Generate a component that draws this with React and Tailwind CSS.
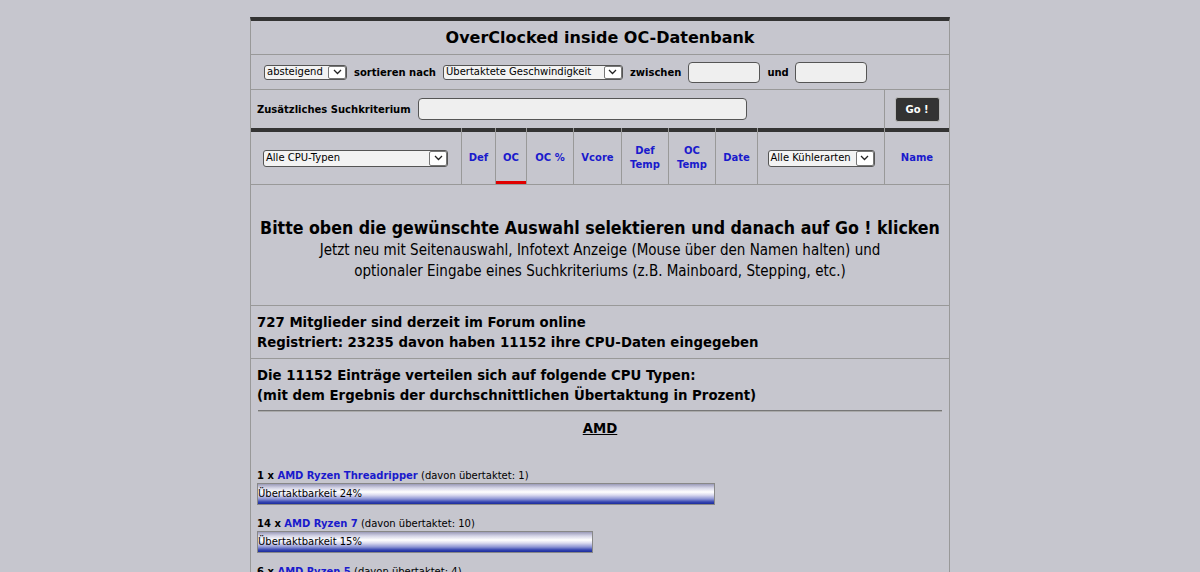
import React from 'react';

const Chevron = () => (
  <svg width="9" height="6" viewBox="0 0 9 6" fill="none">
    <path d="M1 1l3.5 3.5L8 1" stroke="#222" strokeWidth="1.3" />
  </svg>
);

// imitation of the old windows-style select box
const FakeSelect = ({ label, className }) => (
  <div className={`flex items-stretch border border-[#555] rounded-[3px] bg-[#f3f3f3] text-[10px] font-normal leading-none text-black ${className}`}>
    <span className="flex-1 flex items-center pl-[2px] whitespace-nowrap overflow-hidden">{label}</span>
    <span className="flex items-center justify-center w-[18px] border border-[#777] rounded-[2px] bg-white">
      <Chevron />
    </span>
  </div>
);

const Sep = () => <div className="w-px bg-[#999] self-stretch" />;

const HeadCell = ({ w, children, active }) => (
  <div className={`${w} border-t-4 border-[#333] flex items-center justify-center text-center text-[10px] font-bold leading-[14px] text-[#1a1acc] relative`}>
    {children}
    {active && <div className="absolute left-0 right-0 bottom-0 h-[3px] bg-[#e00000]" />}
  </div>
);

const entries = [
  { n: 1, name: 'AMD Ryzen Threadripper', oc: 1, pct: 24, w: 'w-[458px]' },
  { n: 14, name: 'AMD Ryzen 7', oc: 10, pct: 15, w: 'w-[336px]' },
  { n: 6, name: 'AMD Ryzen 5', oc: 4, pct: 13, w: 'w-[300px]' },
];

export default function App() {
  return (
    <div className="min-h-screen bg-[#c6c6ce] pt-[17px] font-['DejaVu_Sans','Liberation_Sans',sans-serif] text-black">
      <div className="mx-auto w-[700px] border-x border-[#999] border-t-4 border-t-[#333] bg-[#c6c6ce]">
        {/* title */}
        <div className="h-[34px] flex items-center justify-center border-b border-[#999] text-[16px] font-bold">
          OverClocked inside OC-Datenbank
        </div>

        {/* sort row */}
        <div className="h-[35px] flex items-center border-b border-[#999] pl-[13px] text-[10px] font-bold">
          <FakeSelect label="absteigend" className="w-[83px] h-[15px]" />
          <span className="ml-[7px]">sortieren nach</span>
          <FakeSelect label="Übertaktete Geschwindigkeit" className="ml-[7px] w-[180px] h-[15px]" />
          <span className="ml-[7px]">zwischen</span>
          <div className="ml-[7px] w-[72px] h-[21px] border border-[#555] rounded-[4px] bg-[#efefef]" />
          <span className="ml-[7px]">und</span>
          <div className="ml-[6px] w-[72px] h-[21px] border border-[#555] rounded-[4px] bg-[#efefef]" />
        </div>

        {/* search row */}
        <div className="h-[38px] flex">
          <div className="w-[633px] flex items-center pl-[6px] text-[10px] font-bold">
            <span>Zusätzliches Suchkriterium</span>
            <div className="ml-[7px] w-[329px] h-[22px] border border-[#555] rounded-[4px] bg-[#efefef]" />
          </div>
          <Sep />
          <div className="flex-1 flex items-center justify-center">
            <div className="w-[45px] h-[25px] rounded-[3px] bg-[#333] border border-[#bbb] text-white text-[10px] font-bold flex items-center justify-center">
              Go !
            </div>
          </div>
        </div>

        {/* table header */}
        <div className="h-[57px] flex border-b border-[#999]">
          <div className="w-[210px] border-t-4 border-[#333] flex items-center pl-[12px]">
            <FakeSelect label="Alle CPU-Typen" className="w-[185px] h-[17px]" />
          </div>
          <Sep />
          <HeadCell w="w-[33px]">Def</HeadCell>
          <Sep />
          <HeadCell w="w-[30px]" active>OC</HeadCell>
          <Sep />
          <HeadCell w="w-[46px]">OC %</HeadCell>
          <Sep />
          <HeadCell w="w-[47px]">Vcore</HeadCell>
          <Sep />
          <HeadCell w="w-[46px]">Def<br />Temp</HeadCell>
          <Sep />
          <HeadCell w="w-[46px]">OC<br />Temp</HeadCell>
          <Sep />
          <HeadCell w="w-[41px]">Date</HeadCell>
          <Sep />
          <div className="w-[126px] border-t-4 border-[#333] flex items-center justify-center">
            <FakeSelect label="Alle Kühlerarten" className="w-[107px] h-[17px]" />
          </div>
          <Sep />
          <HeadCell w="flex-1">Name</HeadCell>
        </div>

        {/* message */}
        <div className="h-[121px] border-b border-[#999] flex flex-col items-center justify-center text-center font-['DejaVu_Sans_Condensed','DejaVu_Sans',sans-serif] font-stretch-condensed pt-[8px]">
          <div className="text-[17.6px] font-bold leading-[22px]">
            Bitte oben die gewünschte Auswahl selektieren und danach auf Go ! klicken
          </div>
          <div className="text-[15px] leading-[21px] mt-[1px]">
            Jetzt neu mit Seitenauswahl, Infotext Anzeige (Mouse über den Namen halten) und
            <br />
            optionaler Eingabe eines Suchkriteriums (z.B. Mainboard, Stepping, etc.)
          </div>
        </div>

        {/* stats */}
        <div className="h-[53px] border-b border-[#999] pl-[6px] pt-[7px] text-[13.3px] font-bold leading-[20px]">
          <div>727 Mitglieder sind derzeit im Forum online</div>
          <div>Registriert: 23235 davon haben 11152 ihre CPU-Daten eingegeben</div>
        </div>

        {/* cpu types */}
        <div className="px-[6px] pt-[7px] pb-[10px]">
          <div className="text-[13.3px] font-bold leading-[20px]">
            Die 11152 Einträge verteilen sich auf folgende CPU Typen:
            <br />
            (mit dem Ergebnis der durchschnittlichen Übertaktung in Prozent)
          </div>
          <div className="mt-[4px] mx-px h-[2px] bg-[#777] border-b border-[#aaa]" />
          <div className="mt-[8px] text-center text-[13.3px] font-bold underline leading-[18px]">AMD</div>
          <div className="mt-[31px] flex flex-col gap-[12px]">
            {entries.map((e) => (
              <div key={e.name}>
                <div className="text-[10px] leading-[14px]">
                  <span className="font-bold">{e.n} x </span>
                  <span className="font-bold text-[#1a1acc]">{e.name}</span> (davon übertaktet: {e.oc})
                </div>
                <div
                  className={`${e.w} h-[22px] border border-[#888] text-[10px] leading-none flex items-center bg-[linear-gradient(to_bottom,#9a9ab8_0%,#d6d6e8_20%,#ffffff_40%,#dcdcf0_55%,#8c94d4_75%,#3444b0_90%,#1c2c9c_100%)]`}
                >
                  Übertaktbarkeit {e.pct}%
                </div>
              </div>
            ))}
          </div>
        </div>
      </div>
    </div>
  );
}
